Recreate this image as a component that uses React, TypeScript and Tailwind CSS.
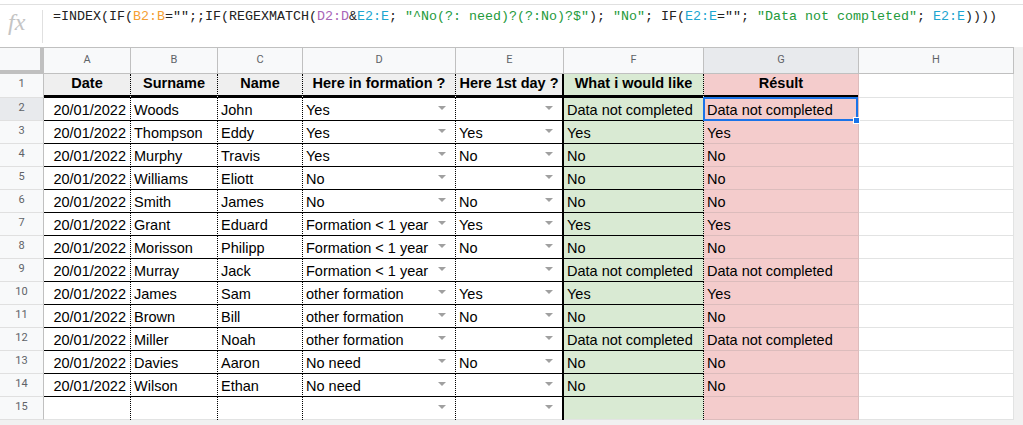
import React from "react";

type Row = [string, string, string, string, string, string];

const data: Row[] = [
  ["Woods", "John", "Yes", "", "Data not completed", "Data not completed"],
  ["Thompson", "Eddy", "Yes", "Yes", "Yes", "Yes"],
  ["Murphy", "Travis", "Yes", "No", "No", "No"],
  ["Williams", "Eliott", "No", "", "No", "No"],
  ["Smith", "James", "No", "No", "No", "No"],
  ["Grant", "Eduard", "Formation < 1 year", "Yes", "Yes", "Yes"],
  ["Morisson", "Philipp", "Formation < 1 year", "No", "No", "No"],
  ["Murray", "Jack", "Formation < 1 year", "", "Data not completed", "Data not completed"],
  ["James", "Sam", "other formation", "Yes", "Yes", "Yes"],
  ["Brown", "Bill", "other formation", "No", "No", "No"],
  ["Miller", "Noah", "other formation", "", "Data not completed", "Data not completed"],
  ["Davies", "Aaron", "No need", "No", "No", "No"],
  ["Wilson", "Ethan", "No need", "", "No", "No"],
];

const letters = ["A", "B", "C", "D", "E", "F", "G", "H"];
const headers = ["Date", "Surname", "Name", "Here in formation ?", "Here 1st day ?", "What i would like", "Résult", ""];

// column widths and right-hand borders
const W = ["w-[87px]", "w-[87px]", "w-[85px]", "w-[153px]", "w-[108px]", "w-[140px]", "w-[155px]", "w-[155px]"];
const dotted = "border-r border-dotted border-black";
const R = [
  dotted,
  dotted,
  dotted,
  dotted,
  "border-r-2 border-black",
  dotted,
  "border-r border-[#dcbcbc]",
  "border-r border-[#e2e3e3]",
];

const BG_HEAD = ["bg-[#efefef]", "bg-[#efefef]", "bg-[#efefef]", "bg-[#efefef]", "bg-[#efefef]", "bg-[#d9ead3]", "bg-[#f4cccc]", "bg-white"];
const BG = ["bg-white", "bg-white", "bg-white", "bg-white", "bg-white", "bg-[#d9ead3]", "bg-[#f4cccc]", "bg-white"];

const Arrow = () => (
  <span className="mb-[8px] ml-auto mr-[9px] h-0 w-0 shrink-0 border-x-[4px] border-t-[4px] border-x-transparent border-t-[#a0a0a0]" />
);

const RowHead = ({ n, active }: { n: number; active?: boolean }) => (
  <div
    className={`flex h-full w-[44px] shrink-0 items-center justify-center border-b border-r border-b-[#e0e0e0] border-r-[#c0c0c0] pb-[2px] font-['Roboto',sans-serif] text-[11px] text-[#5f6368] ${
      active ? "bg-[#e8eaed]" : "bg-[#f8f9fa]"
    }`}
  >
    {n}
  </div>
);

const Formula = () => (
  <div className="whitespace-pre pl-[10px] pt-[3px] font-['Liberation_Mono',monospace] text-[13.33px] leading-[18px] text-[#222]">
    =INDEX(IF(<span className="text-[#f5a033]">B2:B</span>="";;IF(REGEXMATCH(
    <span className="text-[#a866b8]">D2:D</span>&amp;<span className="text-[#1ea6d0]">E2:E</span>;{" "}
    <span className="text-[#239a3b]">"^No(?: need)?(?:No)?$"</span>); <span className="text-[#239a3b]">"No"</span>; IF(
    <span className="text-[#1ea6d0]">E2:E</span>=""; <span className="text-[#239a3b]">"Data not completed"</span>;{" "}
    <span className="text-[#1ea6d0]">E2:E</span>))))
  </div>
);

const App = () => {
  const lineFor = (c: number, last: boolean) => {
    if (c === 7) return "shadow-[inset_0_-1px_0_#e2e3e3]";
    if (c === 6) return "shadow-[inset_0_-1px_0_#dcbcbc]";
    if (last) return "shadow-[inset_0_-1px_0_#e2e3e3]";
    return "shadow-[inset_0_-1px_0_#000]";
  };

  const rows = [...data.map((r) => ["20/01/2022", ...r]), ["", "", "", "", "", "", ""]];

  return (
    <div className="relative h-[425px] w-[1023px] overflow-hidden bg-white font-['Liberation_Sans',Arial,sans-serif] text-[14.5px] text-black">
      {/* formula bar */}
      <div className="h-[47px] pt-[4px]">
        <div className="flex h-[43px] border-t border-[#e0e0e0]">
          <div className="w-[42px] shrink-0 pl-[8px] pt-[5px] font-['Liberation_Serif',serif] text-[24px] italic leading-[24px] text-[#c4c4c4]">
            fx
          </div>
          <div className="mt-[5px] h-[33px] w-px bg-[#e0e0e0]" />
          <Formula />
        </div>
      </div>

      <div className="flex h-[378px]">
        <div className="w-[1014px] shrink-0">
          {/* column letters */}
          <div className="flex h-[27px] border-t border-[#c0c0c0]">
            <div className="h-full w-[44px] shrink-0 border-b-4 border-r-4 border-[#c0c0c0] bg-[#f8f9fa]" />
            {letters.map((l, i) => (
              <div
                key={l}
                className={`flex h-full shrink-0 items-center justify-center border-b border-r border-[#c0c0c0] font-['Roboto',sans-serif] text-[11px] text-[#5f6368] ${W[i]} ${
                  i === 6 ? "bg-[#e8eaed]" : "bg-[#f8f9fa]"
                }`}
              >
                {l}
              </div>
            ))}
          </div>

          {/* header row */}
          <div className="flex h-[24px]">
            <RowHead n={1} />
            {headers.map((h, i) => (
              <div
                key={i}
                className={`flex h-full shrink-0 items-end justify-center whitespace-nowrap pb-[7px] font-bold leading-[16px] ${W[i]} ${R[i]} ${BG_HEAD[i]} ${
                  i === 7 ? "shadow-[inset_0_-1px_0_#e2e3e3]" : "shadow-[inset_0_-3px_0_#000]"
                }`}
              >
                {h}
              </div>
            ))}
          </div>

          {/* data rows */}
          {rows.map((r, ri) => {
            const n = ri + 2;
            const last = n === 15;
            return (
              <div key={n} className="flex h-[23px]">
                <RowHead n={n} active={n === 2} />
                {[...r, ""].map((v, c) => (
                  <div
                    key={c}
                    className={`relative flex h-full shrink-0 items-end whitespace-nowrap pb-[3px] leading-[16px] ${W[c]} ${R[c]} ${BG[c]} ${lineFor(c, last)} ${
                      c === 0 ? "justify-end pr-[4px]" : "pl-[3px]"
                    }`}
                  >
                    <span>{v}</span>
                    {(c === 3 || c === 4) && <Arrow />}
                    {n === 2 && c === 6 && (
                      <div className="absolute -top-px -left-px bottom-0 right-0 z-10 border-2 border-[#1a73e8]">
                        <div className="absolute left-[148px] top-[18px] h-[7px] w-[7px] border border-white bg-[#1a73e8]" />
                      </div>
                    )}
                  </div>
                ))}
              </div>
            );
          })}

          <div className="h-[5px] bg-[#f1f1f1]" />
        </div>
        <div className="h-full w-[9px] shrink-0 bg-[#f1f1f1]" />
      </div>
    </div>
  );
};

export default App;
